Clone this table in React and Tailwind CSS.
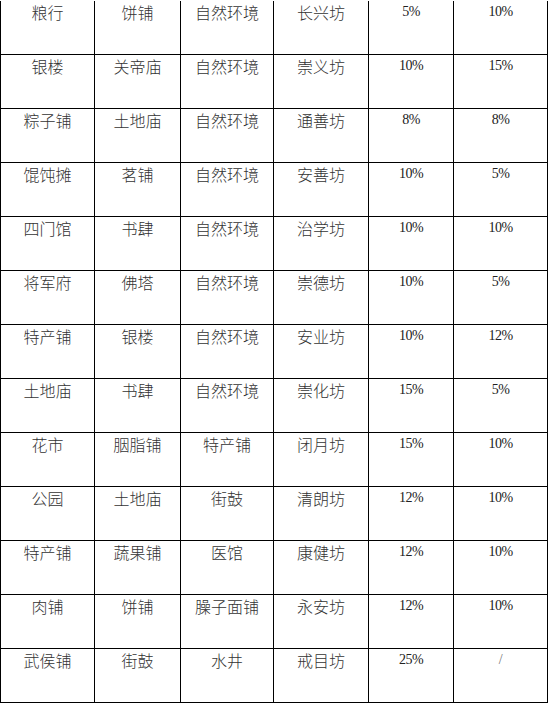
const rows = [
  ["粮行", "饼铺", "自然环境", "长兴坊", "5%", "10%"],
  ["银楼", "关帝庙", "自然环境", "崇义坊", "10%", "15%"],
  ["粽子铺", "土地庙", "自然环境", "通善坊", "8%", "8%"],
  ["馄饨摊", "茗铺", "自然环境", "安善坊", "10%", "5%"],
  ["四门馆", "书肆", "自然环境", "治学坊", "10%", "10%"],
  ["将军府", "佛塔", "自然环境", "崇德坊", "10%", "5%"],
  ["特产铺", "银楼", "自然环境", "安业坊", "10%", "12%"],
  ["土地庙", "书肆", "自然环境", "崇化坊", "15%", "5%"],
  ["花市", "胭脂铺", "特产铺", "闭月坊", "15%", "10%"],
  ["公园", "土地庙", "街鼓", "清朗坊", "12%", "10%"],
  ["特产铺", "蔬果铺", "医馆", "康健坊", "12%", "10%"],
  ["肉铺", "饼铺", "臊子面铺", "永安坊", "12%", "10%"],
  ["武侯铺", "街鼓", "水井", "戒目坊", "25%", "/"],
];

export default function App() {
  return (
    <div className="mt-px w-[548px] bg-white">
      <div className="grid grid-cols-[94px_86px_93px_95px_85px_94px] border-l border-black">
        {rows.map((row, i) =>
          row.map((cell, j) =>
            j < 4 ? (
              <div
                key={i + "-" + j}
                className="h-[54px] border-r border-b border-black pt-[1px] text-center text-[16px] leading-[20px] text-[#333] font-['Noto_Sans_CJK_SC',sans-serif] font-light"
              >
                {cell}
              </div>
            ) : (
              <div
                key={i + "-" + j}
                className={
                  "h-[54px] border-r border-b border-black pt-[1px] text-center text-[14px] leading-[20px] tracking-[-0.5px] font-['Liberation_Serif',serif] " +
                  (cell === "/" ? "text-[#777]" : "text-[#222]")
                }
              >
                {cell}
              </div>
            )
          )
        )}
      </div>
    </div>
  );
}
